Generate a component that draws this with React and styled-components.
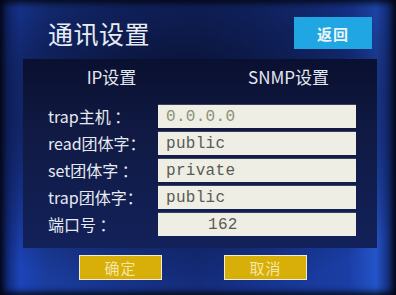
import React from 'react';
import styled, {createGlobalStyle} from 'styled-components';

const GlobalStyle = createGlobalStyle`
  html, body {
    margin: 0;
    padding: 0;
    background: #050810;
  }
  body {
    font-family: "Noto Sans CJK SC", "Noto Sans", sans-serif;
  }
`;

const fields = [
  {label: 'trap主机 ：', value: '0.0.0.0', dim: true},
  {label: 'read团体字：', value: 'public'},
  {label: 'set团体字 ：', value: 'private'},
  {label: 'trap团体字：', value: 'public'},
  {label: '端口号 ：', value: '162', indent: 42},
];

const App = () => {
  return (
    <>
      <GlobalStyle />
      <Screen>
        <Header>
          <Title>通讯设置</Title>
          <BackButton>返回</BackButton>
        </Header>
        <Panel>
          <Tabs>
            <Tab>IP设置</Tab>
            <Tab>SNMP设置</Tab>
          </Tabs>
          <Form>
            {fields.map((f) => (
              <Row key={f.label}>
                <Label>{f.label}</Label>
                <Input $dim={f.dim} $indent={f.indent}>{f.value}</Input>
              </Row>
            ))}
          </Form>
        </Panel>
        <Footer>
          <ActionButton>确定</ActionButton>
          <ActionButton>取消</ActionButton>
        </Footer>
      </Screen>
    </>
  );
};

export default App;

const Screen = styled.div`
  width: 396px;
  height: 295px;
  box-sizing: border-box;
  display: flex;
  flex-direction: column;
  overflow: hidden;
  background:
    radial-gradient(ellipse 75% 65% at 45% 35%, rgba(8, 14, 40, 0.95) 0%, rgba(12, 24, 70, 0.7) 55%, rgba(0, 0, 0, 0) 100%),
    linear-gradient(90deg, #0c1a55 0%, #1c44b8 5%, #1a3c9c 12%, #152e80 50%, #1a3ea6 88%, #2454c8 95%, #0c1a50 100%);
  box-shadow: inset 0 0 6px 3px rgba(0, 0, 0, 0.8);
`;

const Header = styled.div`
  display: flex;
  justify-content: space-between;
  align-items: center;
  padding: 17px 24px 0 48px;
  height: 32px;
`;

const Title = styled.div`
  color: #e8ecf4;
  font-size: 25px;
  letter-spacing: 0.5px;
  line-height: 32px;
`;

const BackButton = styled.div`
  width: 78px;
  height: 32px;
  background: #20a6e2;
  color: #eef4f8;
  font-size: 15px;
  font-weight: bold;
  display: flex;
  align-items: center;
  justify-content: center;
  letter-spacing: 1px;
`;

const Panel = styled.div`
  margin: 10px 19px 0 23px;
  height: 189px;
  background: linear-gradient(180deg, #0a1030 0%, #101a44 40%, #13215a 100%);
  display: flex;
  flex-direction: column;
`;

const Tabs = styled.div`
  display: grid;
  grid-template-columns: 1fr 1fr;
  height: 34px;
`;

const Tab = styled.div`
  display: flex;
  align-items: center;
  justify-content: center;
  color: #e4e8f0;
  font-size: 17px;
`;

const Form = styled.div`
  display: flex;
  flex-direction: column;
  gap: 3px;
  padding: 11px 0 0 25px;
`;

const Row = styled.div`
  display: flex;
  align-items: center;
  height: 24px;
`;

const Label = styled.div`
  width: 110px;
  color: #e6eaf2;
  font-size: 16px;
  white-space: pre;
`;

const Input = styled.div`
  width: 198px;
  height: 24px;
  box-sizing: border-box;
  background: #eeeee4;
  border-top: 1px solid #3a4258;
  padding-left: ${(p) => 8 + (p.$indent || 0)}px;
  display: flex;
  align-items: center;
  font-family: "Liberation Mono", "DejaVu Sans Mono", monospace;
  font-size: 16px;
  letter-spacing: 0.3px;
  color: ${(p) => (p.$dim ? '#8c9278' : '#5a5a56')};
`;

const Footer = styled.div`
  display: flex;
  gap: 62px;
  padding: 7px 0 0 79px;
`;

const ActionButton = styled.div`
  width: 83px;
  height: 25px;
  box-sizing: border-box;
  background: #d8ae08;
  border: 1px solid #f0ecd8;
  color: #f4e6a8;
  font-size: 15px;
  display: flex;
  align-items: center;
  justify-content: center;
  letter-spacing: 1px;
`;
